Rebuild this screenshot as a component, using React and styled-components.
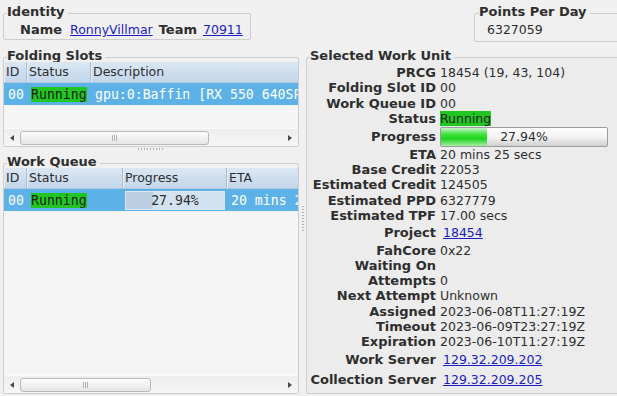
import React from 'react';
import styled, { createGlobalStyle } from 'styled-components';

const GlobalStyle = createGlobalStyle`
  * { box-sizing: border-box; }
  body {
    margin: 0;
    background: #f0f0f0;
  }
`;

const Window = styled.div`
  width: 617px;
  height: 396px;
  overflow: hidden;
  display: flex;
  flex-direction: column;
  background: #f0f0f0;
  font-family: "DejaVu Sans", "Liberation Sans", sans-serif;
  font-size: 12.5px;
  color: #2e2e2e;
`;

const TopRow = styled.div`
  display: flex;
  justify-content: space-between;
  align-items: flex-start;
  height: 42px;
  flex-shrink: 0;
  padding-left: 3px;
`;

const Frame = styled.fieldset`
  margin: 0;
  padding: 0;
  min-width: 0;
  border: 1px solid #cdcdcd;
  border-radius: 2px;
`;

const FrameTitle = styled.legend`
  margin-left: ${p => p.$indent ?? 3}px;
  padding: 0 3px 3px 0;
  font-weight: bold;
  font-size: 13px;
  line-height: 13px;
  color: #2e2e2e;
`;

const IdentityFrame = styled(Frame)`
  margin-top: 5px;
  width: 248px;
`;

const PointsFrame = styled(Frame)`
  margin-top: 5px;
  margin-right: -4px;
  width: 147px;
`;

const InlineRow = styled.div`
  display: flex;
  align-items: center;
  height: ${p => p.$h ?? 18}px;
  line-height: 18px;
  padding-left: ${p => p.$pad ?? 16}px;
  padding-bottom: ${p => p.$bottom ?? 0}px;
  white-space: nowrap;
`;

const FieldLabel = styled.span`
  font-weight: bold;
  font-size: 13px;
  margin-right: ${p => p.$gap ?? 6}px;
`;

const Link = styled.a`
  color: #1c1cc0;
  text-decoration: underline;
  margin-right: ${p => p.$gap ?? 0}px;
  padding-left: ${p => p.$pad ?? 0}px;
  cursor: pointer;
`;

const Main = styled.div`
  display: flex;
  flex: 1;
  min-height: 0;
`;

const LeftPane = styled.div`
  width: 296px;
  margin-left: 3px;
  padding-top: 7px;
  display: flex;
  flex-direction: column;
  flex-shrink: 0;
`;

const Tree = styled.div`
  margin-top: -3px;
  display: flex;
  flex-direction: column;
`;

const ListBody = styled.div`
  height: ${p => p.$h}px;
  background: #f5f5f5;
  overflow: hidden;
  white-space: nowrap;
`;

const HeaderRow = styled.div`
  display: flex;
  height: 21px;
  background: linear-gradient(#dbe7f3, #c3d6ea);
  border-bottom: 1px solid #b3c9df;
`;

const HeaderCell = styled.div`
  flex: 0 0 ${p => p.$w ? `${p.$w}px` : 'auto'};
  flex-grow: ${p => p.$w ? 0 : 1};
  padding-left: 2px;
  line-height: 20px;
  color: #2e2e2e;
  border-right: ${p => p.$w ? '1px solid #a9bfd5' : 'none'};
  box-shadow: inset 1px 0 #e6eef7;
`;

const BodyRow = styled.div`
  display: flex;
  align-items: center;
  height: 22px;
  background: ${p => p.$selected ? '#5cb2e6' : 'transparent'};
  color: ${p => p.$selected ? '#ffffff' : '#2e2e2e'};
  font-family: "DejaVu Sans Mono", "Liberation Mono", monospace;
  font-size: 13.2px;
`;

const BodyCell = styled.div`
  flex: 0 0 ${p => p.$w ? `${p.$w}px` : 'auto'};
  padding-left: ${p => p.$pad ?? 4}px;
  padding-right: ${p => p.$padR ?? 0}px;
`;

const StatusBadge = styled.span`
  background: #22c622;
  color: #1e1e1e;
  line-height: 15px;
`;

const CellProgress = styled.div`
  height: 19px;
  border: 1px solid #dbe6f0;
  background: linear-gradient(to right, #bccfe2 ${p => p.$pct}%, #d3e2ef ${p => p.$pct}%);
  color: #2e2e2e;
  text-align: center;
  line-height: 17px;
`;

const Scrollbar = styled.div`
  display: flex;
  align-items: center;
  height: 18px;
  border-top: 1px solid #fafafa;
  background: linear-gradient(#ededed, #f6f6f6);
`;

const ArrowBox = styled.div`
  width: 16px;
  height: 100%;
  display: flex;
  align-items: center;
  justify-content: center;
  flex-shrink: 0;

  &::before {
    content: '';
    border-top: 3.5px solid transparent;
    border-bottom: 3.5px solid transparent;
    ${p => p.$dir === 'left'
      ? 'border-right: 4px solid #4a4a4a;'
      : 'border-left: 4px solid #4a4a4a;'}
  }
`;

const Trough = styled.div`
  flex: 1;
  height: 100%;
  display: flex;
  align-items: center;
`;

const Thumb = styled.div`
  width: ${p => p.$w}px;
  height: 14px;
  border: 1px solid #b9b9b9;
  border-radius: 3px;
  background: linear-gradient(#fdfdfd, #e4e4e4);
  display: flex;
  align-items: center;
  justify-content: center;
`;

const Grip = styled.div`
  width: 5px;
  height: 6px;
  background: repeating-linear-gradient(to right, #b4b4b4 0 1px, transparent 1px 2px);
`;

const HSplit = styled.div`
  height: 8px;
  padding-top: 1px;
  display: flex;
  justify-content: center;
  flex-shrink: 0;
`;

const HDots = styled.div`
  width: 26px;
  height: 2px;
  background: repeating-linear-gradient(to right, #b0b0b0 0 1px, transparent 1px 3px);
`;

const VSplit = styled.div`
  width: 7px;
  flex-shrink: 0;
  display: flex;
  align-items: center;
  justify-content: center;
`;

const VDots = styled.div`
  width: 2px;
  height: 27px;
  background: repeating-linear-gradient(#b0b0b0 0 1px, transparent 1px 3px);
`;

const UnitFrame = styled(Frame)`
  flex: 1;
  margin-top: 7px;
  margin-bottom: 2px;
  margin-right: -4px;
  background: #ececec;
`;

const UnitRow = styled.div`
  display: flex;
  align-items: center;
  height: ${p => p.$h ?? 15.25}px;
  line-height: 15px;
  white-space: nowrap;
`;

const UnitLabel = styled.div`
  width: 129px;
  flex-shrink: 0;
  text-align: right;
  font-weight: bold;
  font-size: 13px;
  margin-right: 4px;
`;

const UnitValue = styled.div`
  display: flex;
  align-items: center;
`;

const Bar = styled.div`
  position: relative;
  width: 168px;
  height: 20px;
  border: 1px solid #9c9c9c;
  border-radius: 2px;
  background: linear-gradient(#ffffff, #f1f1f1 55%, #cfcfcf);
  overflow: hidden;
  text-align: center;
  line-height: 18px;
`;

const BarFill = styled.div`
  height: 100%;
  background: linear-gradient(#c8f3c8, #3fe23f 35%, #1ed41e 60%, #a6eca6);
`;

const BarText = styled.span`
  position: absolute;
  left: 0;
  right: 0;
  top: 0;
  color: #2e2e2e;
`;

const slotColumns = [23, 64];
const queueColumns = [23, 96, 104];

const Scroll = ({ thumb }) => (
  <Scrollbar>
    <ArrowBox $dir="left" />
    <Trough>
      <Thumb $w={thumb}>
        <Grip />
      </Thumb>
    </Trough>
    <ArrowBox $dir="right" />
  </Scrollbar>
);

const units = [
  { label: 'PRCG', value: '18454 (19, 43, 104)' },
  { label: 'Folding Slot ID', value: '00' },
  { label: 'Work Queue ID', value: '00' },
  { label: 'Status', badge: 'Running', h: 16 },
  { label: 'Progress', progress: 27.94, h: 20 },
  { label: 'ETA', value: '20 mins 25 secs' },
  { label: 'Base Credit', value: '22053' },
  { label: 'Estimated Credit', value: '124505' },
  { label: 'Estimated PPD', value: '6327779' },
  { label: 'Estimated TPF', value: '17.00 secs' },
  { label: 'Project', link: '18454', h: 19.5 },
  { label: 'FahCore', value: '0x22' },
  { label: 'Waiting On', value: '' },
  { label: 'Attempts', value: '0' },
  { label: 'Next Attempt', value: 'Unknown' },
  { label: 'Assigned', value: '2023-06-08T11:27:19Z' },
  { label: 'Timeout', value: '2023-06-09T23:27:19Z' },
  { label: 'Expiration', value: '2023-06-10T11:27:19Z' },
  { label: 'Work Server', link: '129.32.209.202', h: 20 },
  { label: 'Collection Server', link: '129.32.209.205', h: 20 },
];

const unitValue = u => {
  if (u.progress !== undefined) {
    return (
      <Bar>
        <BarFill style={{ width: `${u.progress}%` }} />
        <BarText>{u.progress.toFixed(2)}%</BarText>
      </Bar>
    );
  }
  if (u.badge) return <StatusBadge>{u.badge}</StatusBadge>;
  if (u.link) return <Link $pad={3}>{u.link}</Link>;
  return u.value;
};

const App = () => (
  <Window>
    <GlobalStyle />
    <TopRow>
      <IdentityFrame>
        <FrameTitle>Identity</FrameTitle>
        <InlineRow>
          <FieldLabel $gap={6}>Name</FieldLabel>
          <Link $pad={2} $gap={6}>RonnyVillmar</Link>
          <FieldLabel $gap={6}>Team</FieldLabel>
          <Link>70911</Link>
        </InlineRow>
      </IdentityFrame>
      <PointsFrame>
        <FrameTitle $indent={4}>Points Per Day</FrameTitle>
        <InlineRow $pad={12} $h={20} $bottom={2}>6327059</InlineRow>
      </PointsFrame>
    </TopRow>

    <Main>
      <LeftPane>
        <Frame>
          <FrameTitle>Folding Slots</FrameTitle>
          <Tree>
            <ListBody $h={66}>
              <HeaderRow>
                <HeaderCell $w={slotColumns[0]}>ID</HeaderCell>
                <HeaderCell $w={slotColumns[1]}>Status</HeaderCell>
                <HeaderCell>Description</HeaderCell>
              </HeaderRow>
              <BodyRow $selected>
                <BodyCell $w={slotColumns[0]}>00</BodyCell>
                <BodyCell $w={slotColumns[1]}><StatusBadge>Running</StatusBadge></BodyCell>
                <BodyCell>gpu:0:Baffin [RX 550 640SP/560/560X]</BodyCell>
              </BodyRow>
            </ListBody>
            <Scroll thumb={189} />
          </Tree>
        </Frame>

        <HSplit><HDots /></HSplit>

        <Frame>
          <FrameTitle>Work Queue</FrameTitle>
          <Tree>
            <ListBody $h={207}>
              <HeaderRow>
                <HeaderCell $w={queueColumns[0]}>ID</HeaderCell>
                <HeaderCell $w={queueColumns[1]}>Status</HeaderCell>
                <HeaderCell $w={queueColumns[2]}>Progress</HeaderCell>
                <HeaderCell>ETA</HeaderCell>
              </HeaderRow>
              <BodyRow $selected>
                <BodyCell $w={queueColumns[0]}>00</BodyCell>
                <BodyCell $w={queueColumns[1]}><StatusBadge>Running</StatusBadge></BodyCell>
                <BodyCell $w={queueColumns[2]} $pad={2} $padR={2}>
                  <CellProgress $pct={27.94}>27.94%</CellProgress>
                </BodyCell>
                <BodyCell>20 mins 25 secs</BodyCell>
              </BodyRow>
            </ListBody>
            <Scroll thumb={131} />
          </Tree>
        </Frame>
      </LeftPane>

      <VSplit><VDots /></VSplit>

      <UnitFrame>
        <FrameTitle>Selected Work Unit</FrameTitle>
        {units.map(u => (
          <UnitRow key={u.label} $h={u.h}>
            <UnitLabel>{u.label}</UnitLabel>
            <UnitValue>{unitValue(u)}</UnitValue>
          </UnitRow>
        ))}
      </UnitFrame>
    </Main>
  </Window>
);

export default App;
